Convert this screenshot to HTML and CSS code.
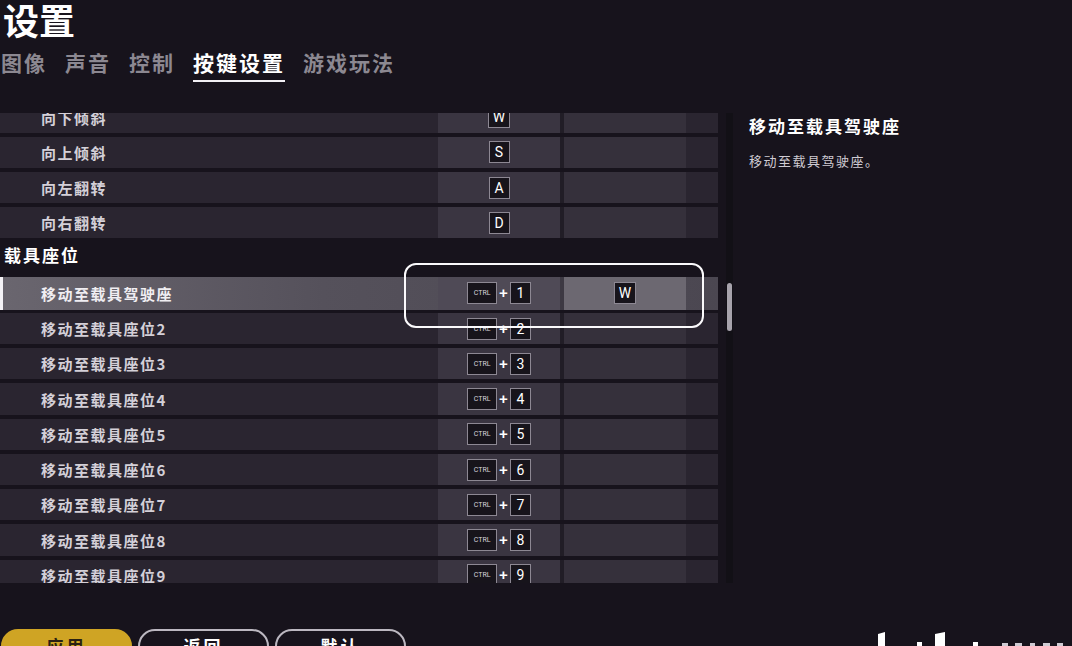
FILE: index.html
```html
<!DOCTYPE html>
<html lang="zh-CN">
<head>
<meta charset="utf-8">
<title>设置</title>
<link rel="stylesheet" href="styles.css">
</head>
<body>
<div class="page">
  <h1 class="title">设置</h1>
  <nav class="tabs">
    <span class="tab">图像</span>
    <span class="tab">声音</span>
    <span class="tab">控制</span>
    <span class="tab active">按键设置</span>
    <span class="tab">游戏玩法</span>
  </nav>

  <main class="main">
    <section class="list">
      <div class="list-inner">
        <div class="row"><div class="label">向下倾斜</div><div class="slot s1"><span class="key">W</span></div><div class="slot s2"></div></div>
        <div class="row"><div class="label">向上倾斜</div><div class="slot s1"><span class="key">S</span></div><div class="slot s2"></div></div>
        <div class="row"><div class="label">向左翻转</div><div class="slot s1"><span class="key">A</span></div><div class="slot s2"></div></div>
        <div class="row"><div class="label">向右翻转</div><div class="slot s1"><span class="key">D</span></div><div class="slot s2"></div></div>
        <div class="row section"><div class="label">载具座位</div></div>
        <div class="row selected"><div class="label">移动至载具驾驶座</div><div class="slot s1"><span class="key ctrl">CTRL</span><span class="plus">+</span><span class="key">1</span></div><div class="slot s2"><span class="key">W</span></div></div>
        <div class="row"><div class="label">移动至载具座位2</div><div class="slot s1"><span class="key ctrl">CTRL</span><span class="plus">+</span><span class="key">2</span></div><div class="slot s2"></div></div>
        <div class="row"><div class="label">移动至载具座位3</div><div class="slot s1"><span class="key ctrl">CTRL</span><span class="plus">+</span><span class="key">3</span></div><div class="slot s2"></div></div>
        <div class="row"><div class="label">移动至载具座位4</div><div class="slot s1"><span class="key ctrl">CTRL</span><span class="plus">+</span><span class="key">4</span></div><div class="slot s2"></div></div>
        <div class="row"><div class="label">移动至载具座位5</div><div class="slot s1"><span class="key ctrl">CTRL</span><span class="plus">+</span><span class="key">5</span></div><div class="slot s2"></div></div>
        <div class="row"><div class="label">移动至载具座位6</div><div class="slot s1"><span class="key ctrl">CTRL</span><span class="plus">+</span><span class="key">6</span></div><div class="slot s2"></div></div>
        <div class="row"><div class="label">移动至载具座位7</div><div class="slot s1"><span class="key ctrl">CTRL</span><span class="plus">+</span><span class="key">7</span></div><div class="slot s2"></div></div>
        <div class="row"><div class="label">移动至载具座位8</div><div class="slot s1"><span class="key ctrl">CTRL</span><span class="plus">+</span><span class="key">8</span></div><div class="slot s2"></div></div>
        <div class="row"><div class="label">移动至载具座位9</div><div class="slot s1"><span class="key ctrl">CTRL</span><span class="plus">+</span><span class="key">9</span></div><div class="slot s2"></div></div>
      </div>
    </section>
    <div class="scrolltrack"><div class="thumb"></div></div>
    <aside class="detail">
      <h2 class="detail-title">移动至载具驾驶座</h2>
      <p class="detail-desc">移动至载具驾驶座。</p>
    </aside>
    <div class="focus-ring"></div>
  </main>

  <footer class="footer">
    <button class="btn primary">应用</button>
    <button class="btn">返回</button>
    <button class="btn">默认</button>
  </footer>

  <svg class="watermark" width="200" height="16" viewBox="0 0 200 16">
    <polygon points="6,4 13,2 13,16 6,16" fill="#fff"/>
    <rect x="45" y="12" width="5" height="4" fill="#fff"/>
    <polygon points="63,4 73,2 73,16 63,16" fill="#fff"/>
    <rect x="101" y="12" width="5" height="4" fill="#fff"/>
    <rect x="130" y="13" width="6" height="3" fill="#cfcbd3"/>
    <rect x="143" y="13" width="7" height="3" fill="#cfcbd3"/>
    <rect x="158" y="13" width="5" height="3" fill="#cfcbd3"/>
    <rect x="171" y="13" width="7" height="3" fill="#cfcbd3"/>
    <rect x="185" y="13" width="6" height="3" fill="#cfcbd3"/>
  </svg>
</div>
</body>
</html>
```
FILE: styles.css
```css
html, body {
  margin: 0;
  padding: 0;
}
body {
  background: #17131c;
  width: 1072px;
  height: 646px;
  overflow: hidden;
  font-family: "Noto Sans CJK SC", "Noto Sans", sans-serif;
  color: #fff;
}
.page {
  position: relative;
  width: 1072px;
  height: 646px;
}
.title {
  margin: 0;
  padding-left: 3px;
  font-size: 36px;
  line-height: 38px;
  font-weight: 700;
  color: #fff;
}
.tabs {
  display: flex;
  gap: 18px;
  margin-top: 11px;
  padding-left: 1px;
}
.tab {
  font-size: 21px;
  line-height: 26px;
  letter-spacing: 2px;
  font-weight: 700;
  color: #8c8891;
  padding-bottom: 5px;
  border-bottom: 2px solid transparent;
}
.tab.active {
  color: #fff;
  border-bottom-color: #f2f0f4;
}
.main {
  position: relative;
  display: flex;
  margin-top: 31px;
  height: 470px;
}
.list {
  width: 718px;
  height: 470px;
  overflow: hidden;
  flex: none;
}
.list-inner {
  margin-top: -11.6px;
}
.row {
  display: flex;
  height: 31.25px;
  margin-bottom: 4px;
  background: #2a2530;
}
.label {
  width: 438px;
  box-sizing: border-box;
  padding-left: 41px;
  display: flex;
  align-items: center;
  font-size: 15px;
  letter-spacing: 1.5px;
  font-weight: 700;
  color: #d4d0d8;
  flex: none;
}
.slot {
  width: 122px;
  display: flex;
  align-items: center;
  justify-content: center;
  flex: none;
}
.s1 {
  background: #3a3541;
  border-right: 4px solid #211d26;
}
.s2 {
  background: #35303b;
}
.row.section {
  background: transparent;
}
.row.section .label {
  padding-left: 4px;
  padding-bottom: 8px;
  font-size: 17px;
  letter-spacing: 2px;
  color: #fff;
}
.row.selected {
  background: linear-gradient(90deg, #6a666f 0%, #55515b 45%, #4b4751 100%);
  box-shadow: inset 3px 0 0 #f4f2f6;
  height: 33px;
  margin-top: -1px;
  margin-bottom: 3.25px;
}
.row.selected .label {
  color: #f0eef2;
}
.row.selected .s1 {
  background: #4f4a56;
  border-right-color: #3d3943;
}
.row.selected .s2 {
  background: #6c6871;
}
.key {
  box-sizing: border-box;
  height: 22px;
  min-width: 21px;
  padding: 0 4px;
  border: 1px solid #8d8893;
  background: #17141b;
  color: #fff;
  font-family: "Roboto", "Liberation Sans", sans-serif;
  font-size: 14px;
  line-height: 20px;
  text-align: center;
}
.key.ctrl {
  width: 30px;
  font-size: 7px;
  padding: 0;
  color: #d8d4dc;
}
.plus {
  font-family: "Liberation Sans", sans-serif;
  font-weight: 700;
  font-size: 15px;
  color: #fff;
  margin: 0 2px;
  line-height: 20px;
}
.scrolltrack {
  position: relative;
  width: 7px;
  margin-left: 8px;
  height: 470px;
  background: #121016;
  flex: none;
}
.thumb {
  position: absolute;
  left: 1px;
  top: 170px;
  width: 5px;
  height: 48px;
  border-radius: 3px;
  background: #a7a3ac;
}
.detail {
  margin-left: 16px;
  padding-top: 1px;
}
.detail-title {
  margin: 0;
  font-size: 17px;
  line-height: 24px;
  letter-spacing: 2px;
  font-weight: 700;
  color: #fff;
}
.detail-desc {
  margin: 13px 0 0;
  font-size: 13px;
  line-height: 20px;
  letter-spacing: 1.5px;
  color: #cfcbd3;
}
.focus-ring {
  position: absolute;
  left: 404px;
  top: 150px;
  width: 300px;
  height: 65px;
  box-sizing: border-box;
  border: 2.5px solid #fbfafc;
  border-radius: 12px;
}
.footer {
  display: flex;
  gap: 6px;
  margin-top: 46px;
  padding-left: 1px;
}
.btn {
  width: 131px;
  height: 34px;
  box-sizing: border-box;
  border: 2px solid #bcb8c1;
  border-radius: 17px;
  background: #17131c;
  color: #fff;
  font-family: "Noto Sans CJK SC", sans-serif;
  font-size: 17px;
  font-weight: 700;
  letter-spacing: 3px;
  line-height: 28px;
  padding: 0;
  text-align: center;
}
.btn.primary {
  background: #cfa424;
  border-color: #cfa424;
  color: #2a2112;
}
.watermark {
  position: absolute;
  left: 872px;
  top: 630px;
}
```
